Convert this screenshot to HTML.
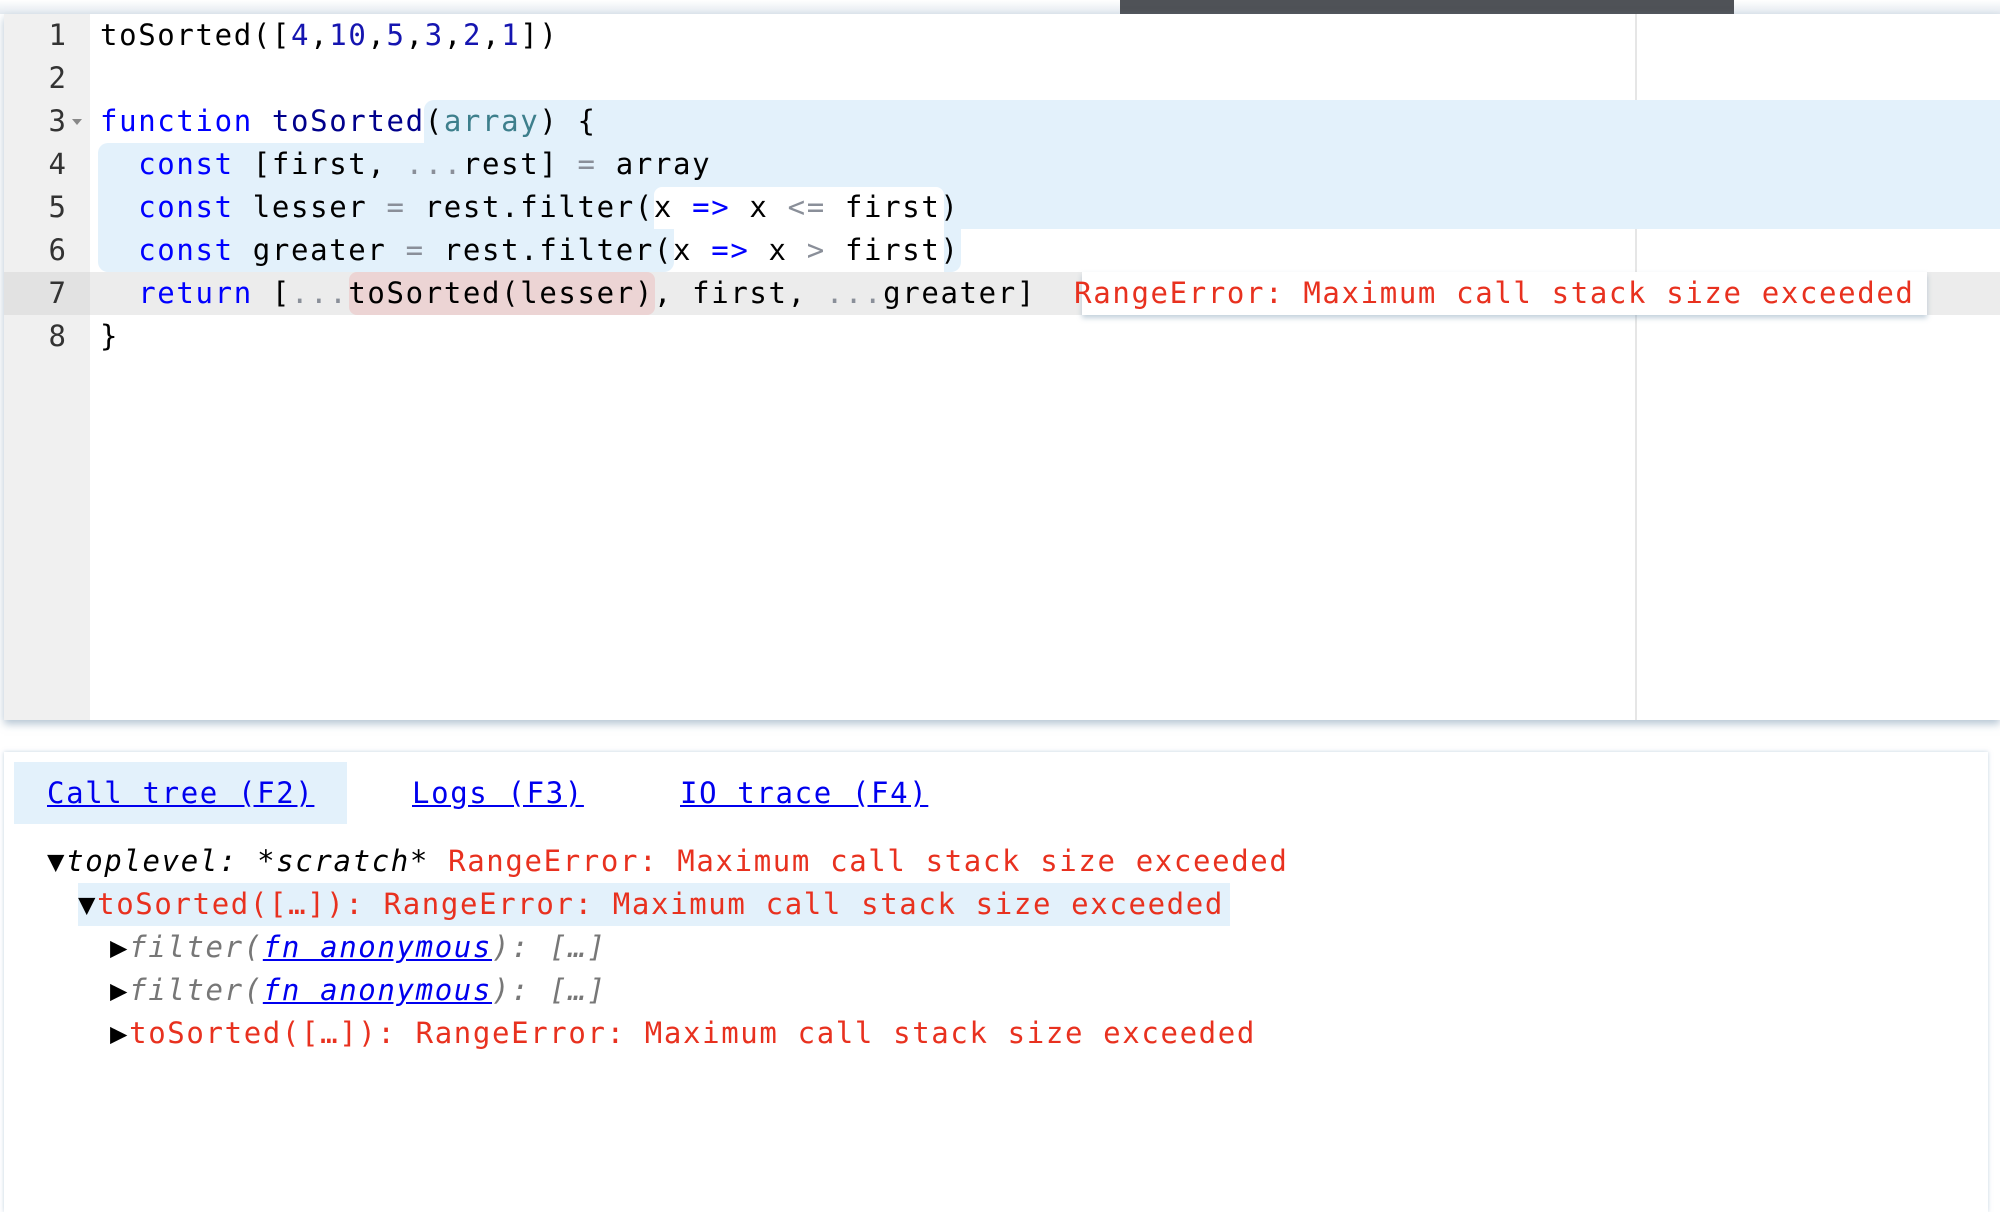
<!DOCTYPE html>
<html><head><meta charset="utf-8"><style>
*{margin:0;padding:0;box-sizing:border-box}
body{width:2000px;height:1200px;background:#fff;position:relative;overflow:hidden;font-family:"DejaVu Sans Mono","Liberation Mono",monospace;font-size:29px;letter-spacing:1.64px}
.abs{position:absolute}
#topbar{left:0;top:0;width:2000px;height:14px;background:linear-gradient(#fff,#e4eaf0)}
#dark{left:1120px;top:0;width:614px;height:14px;background:#4f5257}
#editor{left:4px;top:14px;width:1996px;height:706px;background:#fff;box-shadow:0 4px 8px rgba(120,150,175,.55)}
#gutter{left:4px;top:14px;width:86px;height:706px;background:#f0f0f0}
#ruler{left:1635px;top:14px;width:2px;height:706px;background:#e6e6e6}
.ln{position:absolute;left:4px;width:62px;text-align:right;color:#333;height:43px;line-height:43px;letter-spacing:0}
.cl{position:absolute;left:100px;height:43px;line-height:43px;white-space:pre;color:#000}
.k{color:#0000ff}.d{color:#00008b}.n{color:#1515b0}.p{color:#3d7f8c}.o{color:#8a8f99}.r{color:#e8311f}.g{color:#777}
.bl{background:#e3f1fb}
a{color:#0000ee;text-decoration:underline}
#panel{left:4px;top:752px;width:1984px;height:460px;background:#fff;box-shadow:0 0 4px rgba(140,170,195,.5)}
.tr{position:absolute;height:43px;line-height:43px;white-space:pre}
</style></head><body>
<div id="topbar" class="abs"></div>
<div id="dark" class="abs"></div>
<div id="editor" class="abs"></div>
<div id="ruler" class="abs"></div>
<div class="abs bl" style="left:424px;top:100px;width:1576px;height:43px;border-top-left-radius:10px"></div>
<div class="abs bl" style="left:98px;top:143px;width:1902px;height:86px;border-top-left-radius:10px"></div>
<div class="abs" style="left:654px;top:187px;width:290px;height:42px;background:#fff;border-top-left-radius:8px;border-top-right-radius:8px"></div>
<div class="abs bl" style="left:98px;top:229px;width:576px;height:43px;border-bottom-left-radius:10px;border-bottom-right-radius:10px"></div>
<div class="abs bl" style="left:944px;top:229px;width:17px;height:43px;border-bottom-right-radius:10px"></div>
<div class="abs" style="left:4px;top:272px;width:1996px;height:43px;background:#ececec"></div>
<div class="abs" style="left:349px;top:272px;width:306px;height:43px;background:#ecd4d4;border-radius:8px"></div>
<div class="abs" style="left:1082px;top:272px;width:845px;height:43px;background:#fff;box-shadow:0 3px 5px rgba(120,150,175,.45)"></div>
<div id="gutter" class="abs"></div>
<div class="abs" style="left:4px;top:272px;width:86px;height:43px;background:#e2e2e2"></div>
<div class="ln" style="top:14px">1</div>
<div class="ln" style="top:57px">2</div>
<div class="ln" style="top:100px">3</div>
<div class="abs" style="left:72px;top:119px;width:0;height:0;border-left:5px solid transparent;border-right:5px solid transparent;border-top:6px solid #888"></div>
<div class="ln" style="top:143px">4</div>
<div class="ln" style="top:186px">5</div>
<div class="ln" style="top:229px">6</div>
<div class="ln" style="top:272px">7</div>
<div class="ln" style="top:315px">8</div>
<div class="cl" style="top:14px">toSorted([<span class="n">4</span>,<span class="n">10</span>,<span class="n">5</span>,<span class="n">3</span>,<span class="n">2</span>,<span class="n">1</span>])</div>
<div class="cl" style="top:100px"><span class="k">function</span> <span class="d">toSorted</span>(<span class="p">array</span>) {</div>
<div class="cl" style="top:143px">  <span class="k">const</span> [first, <span class="o">...</span>rest] <span class="o">=</span> array</div>
<div class="cl" style="top:186px">  <span class="k">const</span> lesser <span class="o">=</span> rest.filter(x <span class="k">=&gt;</span> x <span class="o">&lt;=</span> first)</div>
<div class="cl" style="top:229px">  <span class="k">const</span> greater <span class="o">=</span> rest.filter(x <span class="k">=&gt;</span> x <span class="o">&gt;</span> first)</div>
<div class="cl" style="top:272px">  <span class="k">return</span> [<span class="o">...</span>toSorted(lesser), first, <span class="o">...</span>greater]  <span class="r">RangeError: Maximum call stack size exceeded</span></div>
<div class="cl" style="top:315px">}</div>

<div id="panel" class="abs"></div>
<div class="abs bl" style="left:14px;top:762px;width:333px;height:62px"></div>
<div class="tr" style="left:47px;top:772px"><a>Call tree (F2)</a></div>
<div class="tr" style="left:412px;top:772px"><a>Logs (F3)</a></div>
<div class="tr" style="left:680px;top:772px"><a>IO trace (F4)</a></div>
<div class="tr" style="left:47px;top:840px">▼<i>toplevel: *scratch*</i> <span class="r">RangeError: Maximum call stack size exceeded</span></div>
<div class="abs bl" style="left:78px;top:883px;width:1152px;height:43px"></div>
<div class="tr" style="left:78px;top:883px">▼<span class="r">toSorted([…]): RangeError: Maximum call stack size exceeded</span></div>
<div class="tr" style="left:110px;top:926px">▶<i class="g">filter(<a>fn anonymous</a>): […]</i></div>
<div class="tr" style="left:110px;top:969px">▶<i class="g">filter(<a>fn anonymous</a>): […]</i></div>
<div class="tr" style="left:110px;top:1012px">▶<span class="r">toSorted([…]): RangeError: Maximum call stack size exceeded</span></div>
</body></html>
